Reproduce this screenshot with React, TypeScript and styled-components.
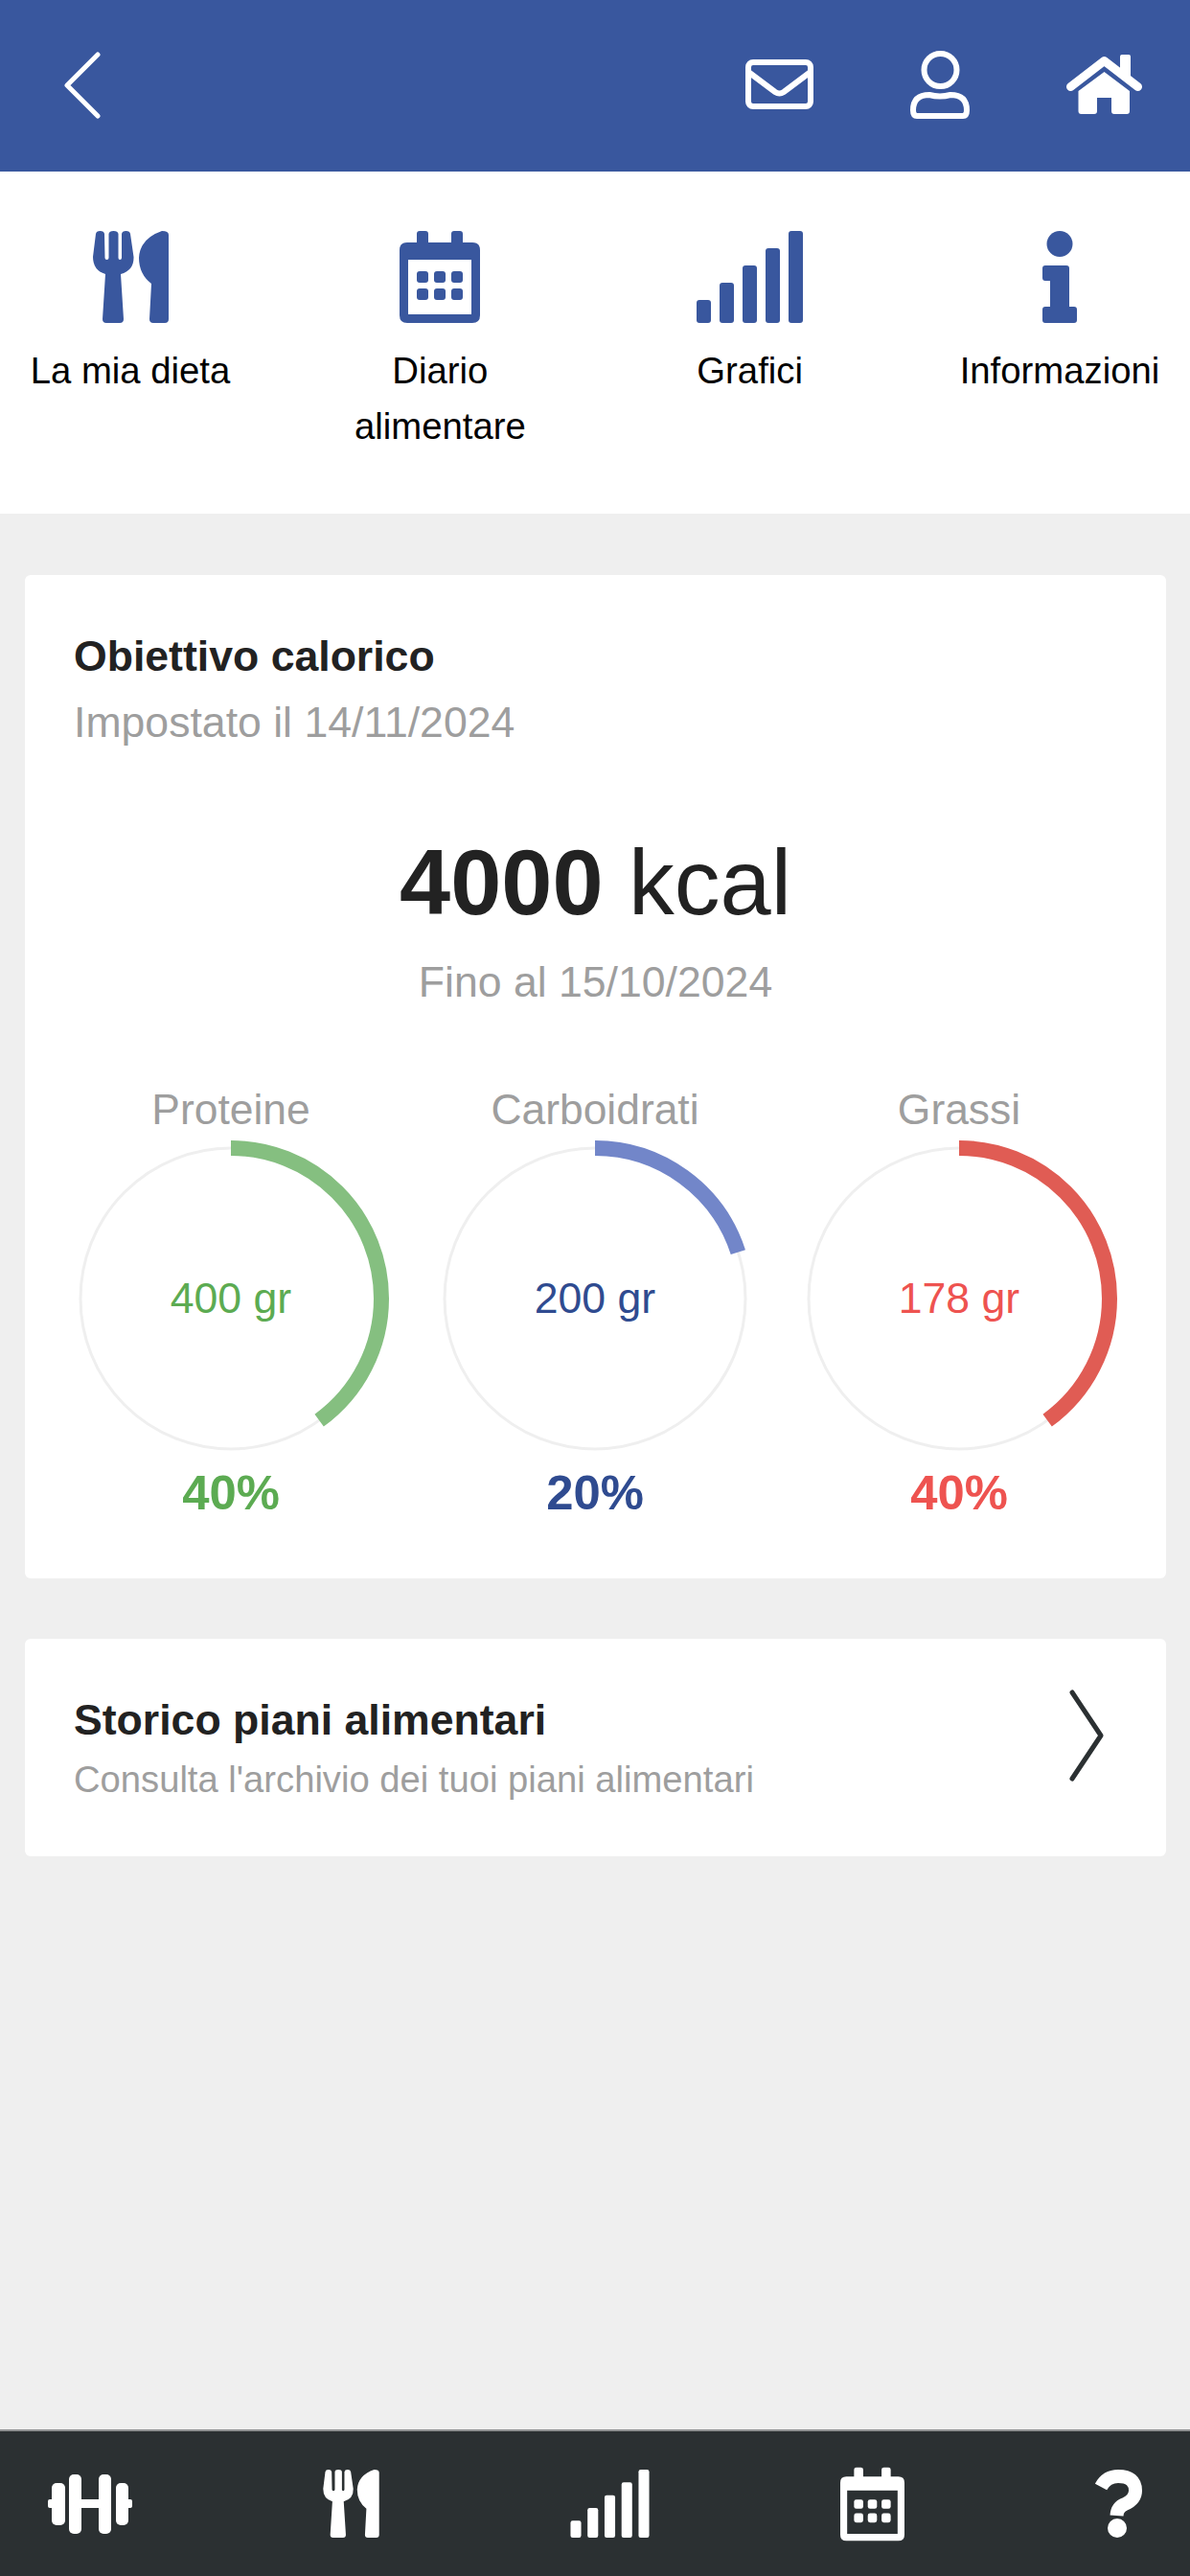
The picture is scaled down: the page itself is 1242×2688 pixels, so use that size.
import * as React from 'react';
import styled, { createGlobalStyle } from 'styled-components';

const blue = '#39579e';
const grey = '#9e9e9e';
const dark = '#222222';

const GlobalStyle = createGlobalStyle`
  html, body {
    margin: 0;
    padding: 0;
    background: #efefef;
    font-family: "Liberation Sans", Arial, sans-serif;
  }
`;

const Page = styled.div`
  width: 1242px;
  height: 2688px;
  display: flex;
  flex-direction: column;
  background: #efefef;
  overflow: hidden;
`;

const Header = styled.header`
  height: 179px;
  flex: none;
  box-sizing: border-box;
  display: flex;
  align-items: flex-start;
  justify-content: space-between;
  padding: 52px 50px 0 67px;
  background: ${blue};
`;

const HeaderIcons = styled.div`
  display: flex;
  align-items: flex-start;
  gap: 101px;
`;

const HeaderIcon = styled.svg<{ $top: number }>`
  display: block;
  margin-top: ${props => props.$top}px;
  color: #ffffff;
`;

const Nav = styled.nav`
  height: 357px;
  flex: none;
  box-sizing: border-box;
  display: flex;
  justify-content: space-between;
  padding: 62px 26px 0;
  background: #ffffff;
`;

const NavItem = styled.div`
  width: 220px;
  display: flex;
  flex-direction: column;
  align-items: center;
  color: ${blue};
`;

const NavLabel = styled.div`
  margin-top: 21px;
  font-size: 38.3px;
  line-height: 58px;
  color: #000000;
  text-align: center;
`;

const Main = styled.main`
  flex: 1;
  display: flex;
  flex-direction: column;
  gap: 63px;
  padding: 64px 25px 0 26px;
`;

const Card = styled.section`
  background: #ffffff;
  border-radius: 6px;
`;

const GoalCard = styled(Card)`
  padding: 55px 25px 59px;
`;

const Title = styled.div`
  padding-left: 26px;
  font-size: 44.6px;
  line-height: 60px;
  font-weight: bold;
  color: ${dark};
`;

const SetOn = styled.div`
  margin-top: 9px;
  padding-left: 26px;
  font-size: 44.6px;
  line-height: 60px;
  color: ${grey};
`;

const Calories = styled.div`
  margin-top: 82px;
  font-size: 95.5px;
  line-height: 110px;
  color: ${dark};
  text-align: center;

  b {
    font-weight: bold;
  }
`;

const Until = styled.div`
  margin-top: 19px;
  font-size: 44.6px;
  line-height: 60px;
  color: ${grey};
  text-align: center;
`;

const Rings = styled.div`
  margin-top: 73px;
  display: grid;
  grid-template-columns: repeat(3, 380px);
`;

const RingColumn = styled.div`
  display: flex;
  flex-direction: column;
  align-items: center;
`;

const RingLabel = styled.div`
  font-size: 44.4px;
  line-height: 60px;
  color: ${grey};
`;

const RingBox = styled.div`
  position: relative;
  width: 330px;
  height: 330px;
  margin-top: 2px;
`;

const RingValue = styled.div<{ $color: string }>`
  position: absolute;
  inset: 0;
  display: flex;
  align-items: center;
  justify-content: center;
  font-size: 44.6px;
  color: ${props => props.$color};
`;

const RingPercent = styled.div<{ $color: string }>`
  margin-top: 8px;
  font-size: 50.8px;
  line-height: 60px;
  font-weight: bold;
  color: ${props => props.$color};
`;

const HistoryCard = styled(Card)`
  height: 227px;
  box-sizing: border-box;
  display: flex;
  align-items: center;
  justify-content: space-between;
  padding: 0 65px 0 51px;
`;

const HistoryTitle = styled.div`
  font-size: 44.6px;
  line-height: 60px;
  font-weight: bold;
  color: ${dark};
`;

const HistoryText = styled.div`
  margin-top: 7px;
  font-size: 38.2px;
  line-height: 50px;
  color: ${grey};
`;

const Chevron = styled.svg`
  display: block;
  margin-bottom: 25px;
  color: #2b3032;
`;

const BottomBar = styled.footer`
  height: 153px;
  flex: none;
  box-sizing: border-box;
  display: flex;
  align-items: center;
  justify-content: space-between;
  padding: 0 50px;
  background: #2b3032;
  border-top: 2px solid #8f9192;
  color: #ffffff;
`;

type IconProps = { width: number; height: number };

const Cutlery = ({ width, height }: IconProps) => (
  <svg width={width} height={height} viewBox="0 0 79 96" fill="currentColor">
    <path d="M3 3Q3.5 0 7.5 0Q11.5 0 12 3L12.5 28Q12.5 30 14.5 30Q16.5 30 16.5 28V3Q17 0 21.5 0Q26 0 26.5 3V28Q26.5 30 28.2 30Q30 30 30 28V3Q30.5 0 34.5 0Q38.5 0 39 3L42.5 27Q43 41 29 45L32 92Q32 96 28 96H14Q10 96 10 92L13 45Q0 41 0 27Z" />
    <path d="M79 4V92Q79 96 75 96H63Q59 96 59 92L61 55Q48 45 48 28Q49 8 72 0Q79 0 79 4Z" />
  </svg>
);

const Calendar = ({ width, height }: IconProps) => (
  <svg width={width} height={height} viewBox="0 0 84 96" fill="currentColor">
    <path
      fillRule="evenodd"
      d="M18 12V3Q18 0 21 0H27Q30 0 30 3V12H54V3Q54 0 57 0H63Q66 0 66 3V12H76Q84 12 84 20V88Q84 96 76 96H8Q0 96 0 88V20Q0 12 8 12ZM9 30V87H75V30Z"
    />
    <rect x="18" y="42" width="12" height="12" rx="3" />
    <rect x="36" y="42" width="12" height="12" rx="3" />
    <rect x="54" y="42" width="12" height="12" rx="3" />
    <rect x="18" y="60" width="12" height="12" rx="3" />
    <rect x="36" y="60" width="12" height="12" rx="3" />
    <rect x="54" y="60" width="12" height="12" rx="3" />
  </svg>
);

const Bars = ({ width, height }: IconProps) => (
  <svg width={width} height={height} viewBox="0 0 111 96" fill="currentColor">
    <rect x="0" y="72" width="15" height="24" rx="3" />
    <rect x="24" y="54" width="15" height="42" rx="3" />
    <rect x="48" y="36" width="15" height="60" rx="3" />
    <rect x="72" y="18" width="15" height="78" rx="3" />
    <rect x="96" y="0" width="15" height="96" rx="3" />
  </svg>
);

const Info = () => (
  <svg width={36} height={96} viewBox="0 0 36 96" fill="currentColor">
    <circle cx="18" cy="13.5" r="13.5" />
    <path d="M3 36H25Q28 36 28 39V79H33Q36 79 36 82V93Q36 96 33 96H3Q0 96 0 93V82Q0 79 3 79H8V52H3Q0 52 0 49V39Q0 36 3 36Z" />
  </svg>
);

const Dumbbell = () => (
  <svg width={88} height={62} viewBox="0 0 88 62" fill="currentColor">
    <rect x="0" y="26" width="8" height="9" rx="2" />
    <rect x="4" y="9" width="14" height="44" rx="5" />
    <rect x="22" y="0" width="13" height="62" rx="5" />
    <rect x="33" y="26" width="22" height="9" />
    <rect x="53" y="0" width="13" height="62" rx="5" />
    <rect x="71" y="9" width="13" height="44" rx="5" />
    <rect x="80" y="26" width="8" height="9" rx="2" />
  </svg>
);

const Question = () => (
  <svg width={49} height={71} viewBox="0 0 49 71">
    <path
      d="M6 18Q12 7 24 7Q42 7 42 22Q42 31 31 36Q23 39 22.5 48"
      fill="none"
      stroke="currentColor"
      strokeWidth="14"
    />
    <circle cx="23" cy="61" r="10" fill="currentColor" />
  </svg>
);

type Macro = {
  label: string;
  value: string;
  percent: number;
  arc: string;
  text: string;
};

const macros: Macro[] = [
  { label: 'Proteine', value: '400 gr', percent: 40, arc: '#85bf80', text: '#5cab52' },
  { label: 'Carboidrati', value: '200 gr', percent: 20, arc: '#7286c9', text: '#2f4b90' },
  { label: 'Grassi', value: '178 gr', percent: 40, arc: '#e05c54', text: '#ee5350' },
];

const Ring = ({ percent, color }: { percent: number; color: string }) => {
  const radius = 157;
  const length = 2 * Math.PI * radius;
  return (
    <svg width={330} height={330} viewBox="0 0 330 330">
      <circle cx="165" cy="165" r="157" fill="none" stroke="#efefef" strokeWidth="3" />
      <circle
        cx="165"
        cy="165"
        r={radius}
        fill="none"
        stroke={color}
        strokeWidth="16"
        strokeDasharray={`${(length * percent) / 100} ${length}`}
        transform="rotate(-90 165 165)"
      />
    </svg>
  );
};

export default function App() {
  return (
    <Page>
      <GlobalStyle />
      <Header>
        <HeaderIcon $top={2} width={38} height={70} viewBox="0 0 38 70" fill="none">
          <path d="M35 3L3 35L35 67" stroke="currentColor" strokeWidth="5" strokeLinecap="round" strokeLinejoin="round" />
        </HeaderIcon>
        <HeaderIcons>
          <HeaderIcon $top={10} width={71} height={52} viewBox="0 0 71 52" fill="none">
            <rect x="3" y="3" width="65" height="46" rx="5" stroke="currentColor" strokeWidth="6" />
            <path d="M3 13L31 34Q35.5 37 40 34L68 13" stroke="currentColor" strokeWidth="6" />
          </HeaderIcon>
          <HeaderIcon $top={1} width={62} height={71} viewBox="0 0 62 71" fill="none">
            <circle cx="31.5" cy="20" r="17" stroke="currentColor" strokeWidth="6" />
            <path d="M3 62Q3 46 20 46Q31 49 42 46Q59 46 59 62Q59 68 55 68H7Q3 68 3 62Z" stroke="currentColor" strokeWidth="6" strokeLinejoin="round" />
          </HeaderIcon>
          <HeaderIcon $top={5} width={79} height={62} viewBox="0 0 79 62" fill="none">
            <rect x="56" y="0" width="11" height="24" rx="2" fill="currentColor" />
            <path d="M4.5 33.5L39.5 6.5L74.5 33.5" stroke="currentColor" strokeWidth="9" strokeLinecap="round" strokeLinejoin="round" />
            <path d="M39.5 18L66 38V59Q66 62 63 62H50Q47 62 47 59V45H32V59Q32 62 29 62H15.5Q12.5 62 12.5 59V38Z" fill="currentColor" />
          </HeaderIcon>
        </HeaderIcons>
      </Header>

      <Nav>
        <NavItem>
          <Cutlery width={79} height={96} />
          <NavLabel>La mia dieta</NavLabel>
        </NavItem>
        <NavItem>
          <Calendar width={84} height={96} />
          <NavLabel>
            Diario
            <br />
            alimentare
          </NavLabel>
        </NavItem>
        <NavItem>
          <Bars width={111} height={96} />
          <NavLabel>Grafici</NavLabel>
        </NavItem>
        <NavItem>
          <Info />
          <NavLabel>Informazioni</NavLabel>
        </NavItem>
      </Nav>

      <Main>
        <GoalCard>
          <Title>Obiettivo calorico</Title>
          <SetOn>Impostato il 14/11/2024</SetOn>
          <Calories>
            <b>4000</b> kcal
          </Calories>
          <Until>Fino al 15/10/2024</Until>
          <Rings>
            {macros.map(macro => (
              <RingColumn key={macro.label}>
                <RingLabel>{macro.label}</RingLabel>
                <RingBox>
                  <Ring percent={macro.percent} color={macro.arc} />
                  <RingValue $color={macro.text}>{macro.value}</RingValue>
                </RingBox>
                <RingPercent $color={macro.text}>{macro.percent}%</RingPercent>
              </RingColumn>
            ))}
          </Rings>
        </GoalCard>

        <HistoryCard>
          <div>
            <HistoryTitle>Storico piani alimentari</HistoryTitle>
            <HistoryText>Consulta l'archivio dei tuoi piani alimentari</HistoryText>
          </div>
          <Chevron width={36} height={96} viewBox="0 0 36 96" fill="none">
            <path d="M3 3L33 48L3 93" stroke="currentColor" strokeWidth="5" strokeLinecap="round" strokeLinejoin="round" />
          </Chevron>
        </HistoryCard>
      </Main>

      <BottomBar>
        <Dumbbell />
        <Cutlery width={59} height={71} />
        <Bars width={83} height={71} />
        <Calendar width={67} height={78} />
        <Question />
      </BottomBar>
    </Page>
  );
}
